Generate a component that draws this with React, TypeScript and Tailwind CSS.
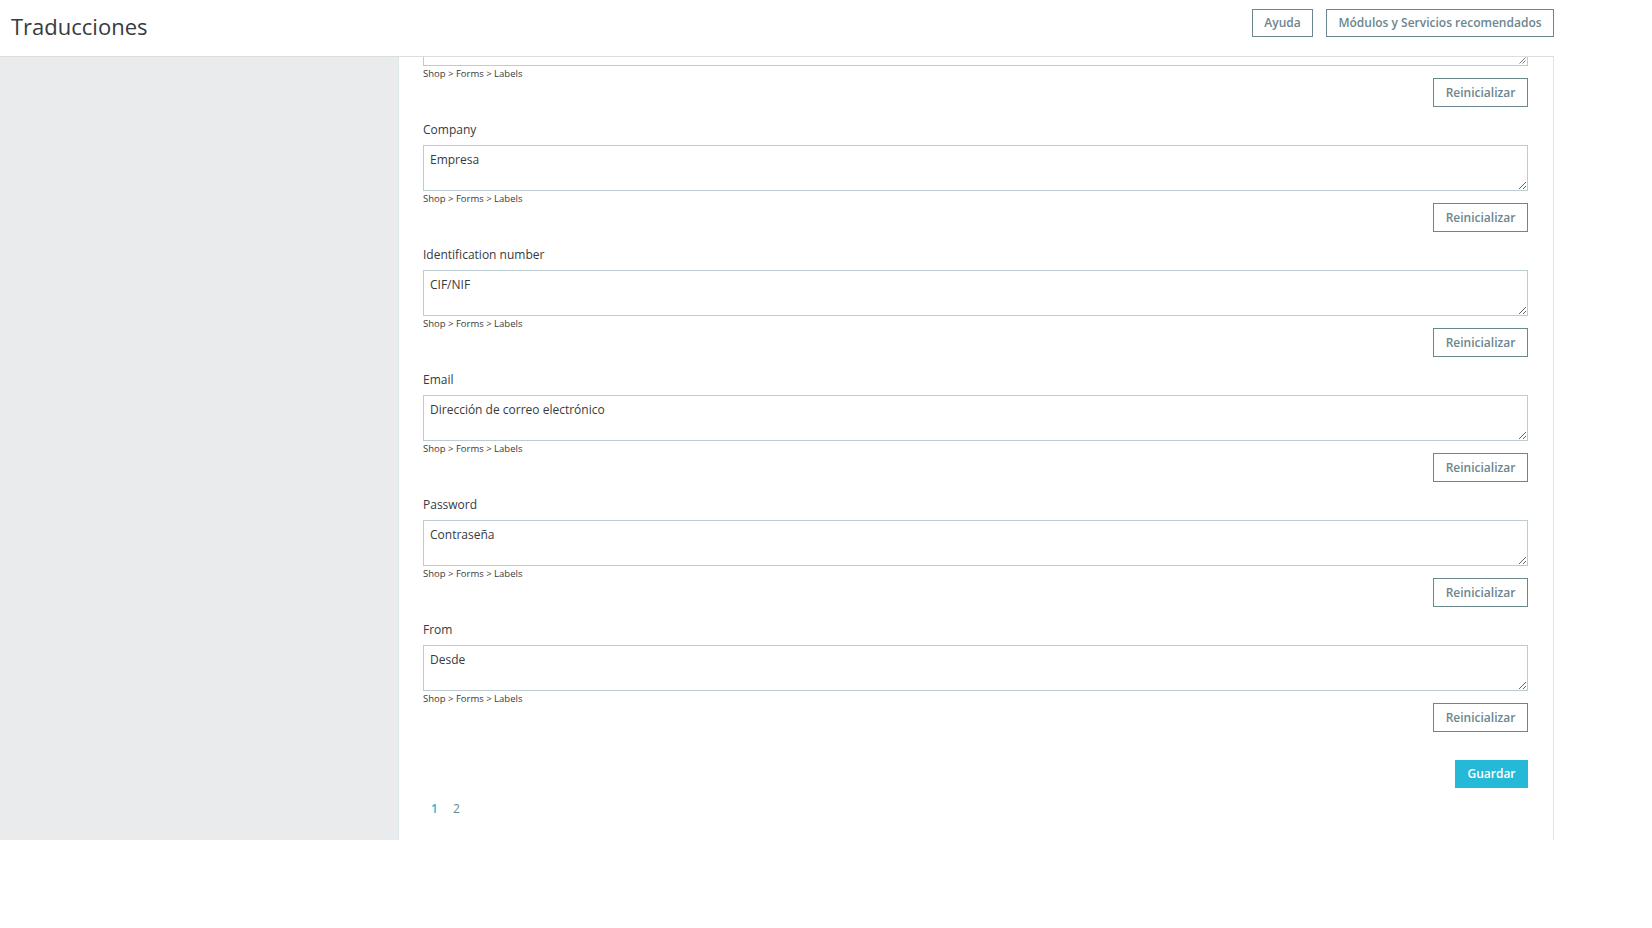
import React from "react";

const items = [
  { label: "Company", value: "Empresa" },
  { label: "Identification number", value: "CIF/NIF" },
  { label: "Email", value: "Dirección de correo electrónico" },
  { label: "Password", value: "Contraseña" },
  { label: "From", value: "Desde" },
];

function Footer() {
  return (
    <>
      <div className="h-[12px] text-[9.5px] leading-[16px] text-[#363a41] whitespace-nowrap">
        Shop &gt; Forms &gt; Labels
      </div>
      <div className="flex justify-end">
        <button className="h-[29px] w-[95px] border border-[#6c868e] text-[#6c868e] text-[12px] font-semibold bg-white">
          Reinicializar
        </button>
      </div>
    </>
  );
}

export default function App() {
  return (
    <div
      className="w-[1652px] h-[928px] bg-white overflow-hidden"
      style={{ fontFamily: '"Open Sans", "Noto Sans", sans-serif' }}
    >
      <div className="w-[1554px] h-[57px] border-b border-[#dddddd] flex items-start justify-between">
        <h1 className="pl-[11px] pt-[10px] text-[22px] leading-[32px] text-[#363a41]">Traducciones</h1>
        <div className="flex gap-[13px] mt-[9px]">
          <button className="h-[28px] w-[61px] border border-[#6c868e] text-[#6c868e] text-[12px] font-semibold bg-white">
            Ayuda
          </button>
          <button className="h-[28px] w-[228px] border border-[#6c868e] text-[#6c868e] text-[12px] font-semibold bg-white">
            Módulos y Servicios recomendados
          </button>
        </div>
      </div>
      <div className="flex w-[1554px] h-[783px]">
        <div className="w-[398px] bg-[#eaebec]" />
        <div className="flex-1 bg-white border-l border-r border-[#dbe6e9] pl-[24px] pr-[25px]">
          <div className="h-[9px] border-x border-b border-[#bbcdd2] relative">
            <svg className="absolute right-[1px] bottom-[1px]" width="7" height="7" viewBox="0 0 7 7">
              <line x1="6.5" y1="0.5" x2="0.5" y2="6.5" stroke="#555" strokeWidth="0.8" />
              <line x1="6.5" y1="3.5" x2="3.5" y2="6.5" stroke="#555" strokeWidth="0.8" />
            </svg>
          </div>
          <Footer />
          {items.map((it) => (
            <div key={it.label} className="mt-[14px]">
              <div className="text-[12px] leading-[18px] text-[#363a41]">{it.label}</div>
              <textarea
                readOnly
                defaultValue={it.value}
                className="block mt-[6px] w-full h-[46px] border border-[#bbcdd2] px-[6px] py-[4px] text-[12px] leading-[20px] text-[#363a41] outline-none"
                style={{ fontFamily: '"Open Sans", "Noto Sans", sans-serif' }}
              />
              <Footer />
            </div>
          ))}
          <div className="flex justify-end mt-[28px]">
            <button className="h-[28px] w-[73px] bg-[#25b9d7] text-white text-[12px] font-semibold">
              Guardar
            </button>
          </div>
          <div className="flex gap-[15px] pl-[8px] mt-[12px] text-[12px] leading-[18px]">
            <span className="text-[#25b9d7] font-semibold">1</span>
            <span className="text-[#6c868e]">2</span>
          </div>
        </div>
      </div>
    </div>
  );
}
